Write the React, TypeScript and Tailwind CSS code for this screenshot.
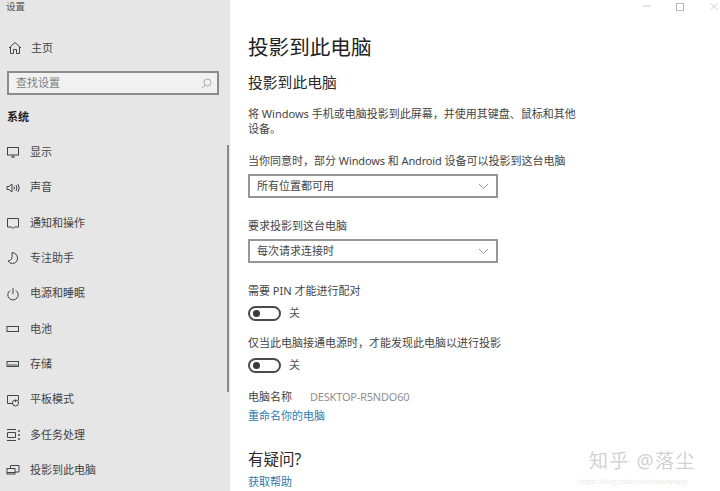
import React from "react";

const font = { fontFamily: '"Noto Sans", "Noto Sans CJK SC", sans-serif' };

const s = { fill: "none", stroke: "#444", strokeWidth: 1 } as const;

const icons: Record<string, React.ReactNode> = {
  display: (<><rect x="1.5" y="2.5" width="11" height="7.5" {...s} /><path d="M5 12h4M7 10v2" {...s} /></>),
  sound: (<><path d="M1 5.5h2L6 3v8L3 8.500H1z" {...s} /><path d="M8 5.500q1 1.500 0 3M10 4q2 3 0 6M12 3q2.500 4 0 8" {...s} /></>),
  notify: (<path d="M1.500 2.500h11v8.500H8.500L7 12.500 5.500 11h-4z" {...s} />),
  moon: (<path d="M6 1.500q5 .5 5.500 5.500 0 5-5 5.500-3 0-4.500-2.500 5 0 4-8.500z" {...s} />),
  power: (<><path d="M4 3.500a5.200 5.200 0 1 0 6 0" {...s} /><path d="M7 1v6" {...s} /></>),
  battery: (<rect x="1" y="4.500" width="11.500" height="5" {...s} />),
  storage: (<><rect x="1" y="4.500" width="11.500" height="5" {...s} /><path d="M2 8h9.500" {...s} /></>),
  tablet: (<><path d="M7 10.500H1.500v-8h11v5" {...s} /><circle cx="9.500" cy="10" r="3" {...s} /><path d="M9.500 7v2" {...s} /></>),
  multi: (<><path d="M1 1.500h9M1 12.500h9M1.500 4.500h8v5h-8z" {...s} /><path d="M13 2v2M13 6v2M13 10v2" {...s} strokeWidth={1.400} /></>),
  project: (<><path d="M4.500 5V2.500h8.500v6.500H9" {...s} /><rect x="1" y="5.500" width="8" height="5.500" {...s} /><path d="M1 9.500h8" {...s} /></>),
};

const items: [string, string][] = [
  ["display", "显示"],
  ["sound", "声音"],
  ["notify", "通知和操作"],
  ["moon", "专注助手"],
  ["power", "电源和睡眠"],
  ["battery", "电池"],
  ["storage", "存储"],
  ["tablet", "平板模式"],
  ["multi", "多任务处理"],
  ["project", "投影到此电脑"],
];

function Select({ label }: { label: string }) {
  return (
    <div className="flex h-[24px] w-[250px] items-center justify-between border-2 border-[#969696] bg-white pl-[7px] pr-[6px] text-[#444]">
      <span>{label}</span>
      <svg width="11" height="7" viewBox="0 0 11 7" className="mr-[1px]">
        <path d="M1 1l4.500 4.500L10 1" fill="none" stroke="#999" strokeWidth="1" />
      </svg>
    </div>
  );
}

function Toggle() {
  return (
    <div className="flex items-center gap-[8px]">
      <div className="flex h-[15px] w-[33px] items-center rounded-full border-2 border-[#4a4a4a] pl-[3px]">
        <div className="h-[7px] w-[7px] rounded-full bg-[#3a3a3a]" />
      </div>
      <span className="text-[#555]">关</span>
    </div>
  );
}

export default function App() {
  return (
    <div className="relative flex h-[491px] w-[720px] overflow-hidden bg-white" style={font}>
      <aside className="relative h-full w-[230px] shrink-0 bg-[#e6e6e6] text-[11px] text-[#444]">
        <div className="pl-[6px] pt-px text-[9.500px] leading-[12px] text-[#555]">设置</div>
        <div className="mt-[27px] flex h-[16px] items-center pl-[8px]">
          <svg width="14" height="14" viewBox="0 0 14 14">
            <path d="M1 7l6-5.500L13 7M2.500 6v6.500h3V8.500h3v4h3V6" fill="none" stroke="#444" />
          </svg>
          <span className="ml-[9px]">主页</span>
        </div>
        <div className="ml-[7px] mt-[15px] flex h-[24px] w-[212px] items-center justify-between border-2 border-[#8c8c8c] bg-[#f1f1f1] pl-[7px] pr-[5px] text-[#808080]">
          <span>查找设置</span>
          <svg width="11" height="11" viewBox="0 0 11 11">
            <circle cx="6.500" cy="4.500" r="3.500" fill="none" stroke="#aaa" />
            <path d="M4 7l-3 3" stroke="#aaa" />
          </svg>
        </div>
        <div className="mt-[14px] pl-[7px] text-[11px] font-bold leading-[16px] text-[#222]">系统</div>
        <nav className="mt-[9.500px] flex flex-col">
          {items.map(([k, t]) => (
            <div key={t} className="flex h-[35.350px] items-center pl-[6px]">
              <svg width="14" height="14" viewBox="0 0 14 14" className="shrink-0">
                {icons[k]}
              </svg>
              <span className="ml-[10px]">{t}</span>
            </div>
          ))}
        </nav>
        <div className="absolute left-[227px] top-[145px] h-[247px] w-[2px] bg-[#8a8a8a]" />
      </aside>

      <main className="min-w-0 flex-1 pl-[18px] text-[11px] leading-[16px] text-[#444]">
        <h1 className="mt-[33px] text-[20.600px] leading-[28px] text-[#222]">投影到此电脑</h1>
        <h2 className="mt-[11px] text-[14.800px] leading-[20px] text-[#2a2a2a]">投影到此电脑</h2>
        <p className="mt-[14px] w-[330px] leading-[15px]">将 Windows 手机或电脑投影到此屏幕，并使用其键盘、鼠标和其他设备。</p>
        <p className="mt-[17px]">当你同意时，部分 <span className="tracking-[-0.150px]">Windows</span> 和 <span className="tracking-[-0.150px]">Android</span> 设备可以投影到这台电脑</p>
        <div className="mt-[5px]"><Select label="所有位置都可用" /></div>
        <p className="mt-[20px]">要求投影到这台电脑</p>
        <div className="mt-[5px]"><Select label="每次请求连接时" /></div>
        <p className="mt-[20px]">需要 PIN 才能进行配对</p>
        <div className="mt-[6px]"><Toggle /></div>
        <p className="mt-[14px]">仅当此电脑接通电源时，才能发现此电脑以进行投影</p>
        <div className="mt-[6px]"><Toggle /></div>
        <div className="mt-[16px] flex">
          <span>电脑名称</span>
          <span className="ml-[18px] tracking-[-0.200px] text-[#8f8f8f]">DESKTOP-R5NDO60</span>
        </div>
        <p className="mt-[3px] text-[#2a7bb0]">重命名你的电脑</p>
        <h3 className="mt-[24px] text-[15.500px] leading-[22px] text-[#2a2a2a]">有疑问?</h3>
        <p className="mt-[4px] text-[#2a7bb0]">获取帮助</p>
      </main>

      <div className="absolute right-0 top-0">
        <svg width="120" height="14" viewBox="0 0 120 14">
          <path d="M43 6h8" stroke="#c4c4c4" />
          <rect x="76.500" y="3.500" width="7" height="7" fill="none" stroke="#b8b8b8" />
          <path d="M110.500 3l7 7M117.500 3l-7 7" stroke="#cfcfcf" />
        </svg>
      </div>
      <div className="absolute left-[589px] top-[449px] text-[19px] leading-[24px] tracking-[1.500px] text-[#d2d2d2]">知乎 @落尘</div>
      <div className="absolute left-[578px] top-[477px] text-[7px] leading-[10px] text-[#eaeaea]">https://blog.csdn.net/seewaysyyy</div>
    </div>
  );
}
